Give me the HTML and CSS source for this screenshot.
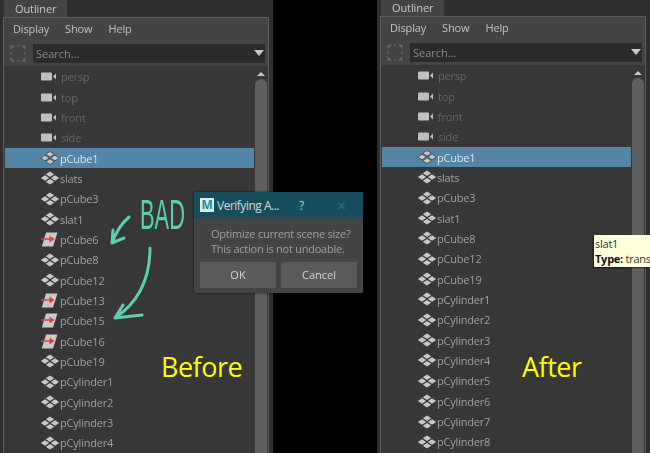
FILE: index.html
```html
<!DOCTYPE html>
<html lang="en">
<head>
    <meta charset="UTF-8">
    <meta name="viewport" content="width=device-width, initial-scale=1.0">
    <title>Outliner before and after</title>
    <link rel="stylesheet" href="styles.css">
</head>
<body>
<svg class="defs" width="0" height="0">
    <symbol id="camera" viewBox="0 0 16 9">
        <rect x="0" y="0.500" width="11" height="8" rx="1" fill="#c0c0c0"/>
        <path d="M12 4.500 15 1.500V7.500Z" fill="#c0c0c0"/>
    </symbol>
    <symbol id="transform" viewBox="0 0 20 14">
        <path d="M10 0.500 14.200 3.300 10 6.100 5.800 3.300ZM5 4.200 9.200 7 5 9.800 0.800 7ZM15 4.200 19.200 7 15 9.800 10.800 7ZM10 7.900 14.200 10.700 10 13.500 5.800 10.700Z" fill="#c8c8c8"/>
    </symbol>
    <symbol id="instance" viewBox="0 0 17 15">
        <path d="M5 0.500H16.500L12 14.500H0.800Z" fill="#cacaca"/>
        <path d="M0 7H9" stroke="#e23c42" stroke-width="1.500"/>
        <path d="M8.500 3.500 13.500 7 8.500 10.500Z" fill="#e23c42"/>
    </symbol>
    <symbol id="frame" viewBox="0 0 16 17">
        <path d="M0.500 0.500H5L0.500 5ZM15.500 0.500H11L15.500 5ZM0.500 16.500H5L0.500 12ZM15.500 16.500H11L15.500 12Z" fill="#666"/>
        <path d="M7 1H9M7 16H9M1 7V10M15 7V10" fill="none" stroke="#5a5a5a" stroke-width="1.500"/>
    </symbol>
</svg>

<div class="window window-before">
    <div class="tabs"><span class="tab">Outliner</span></div>
    <div class="panel">
        <div class="menu"><span>Display</span><span>Show</span><span>Help</span></div>
        <div class="search-row">
            <svg class="frame"><use href="#frame"/></svg>
            <div class="search"><span>Search...</span><i class="caret"></i></div>
        </div>
        <div class="list-area">
            <ul class="list">
                <li class="dim"><svg class="ic-cam"><use href="#camera"/></svg>persp</li>
                <li class="dim"><svg class="ic-cam"><use href="#camera"/></svg>top</li>
                <li class="dim"><svg class="ic-cam"><use href="#camera"/></svg>front</li>
                <li class="dim"><svg class="ic-cam"><use href="#camera"/></svg>side</li>
                <li class="selected"><svg class="ic-xf"><use href="#transform"/></svg>pCube1</li>
                <li><svg class="ic-xf"><use href="#transform"/></svg>slats</li>
                <li><svg class="ic-xf"><use href="#transform"/></svg>pCube3</li>
                <li><svg class="ic-xf"><use href="#transform"/></svg>slat1</li>
                <li><svg class="ic-inst"><use href="#instance"/></svg>pCube6</li>
                <li><svg class="ic-xf"><use href="#transform"/></svg>pCube8</li>
                <li><svg class="ic-xf"><use href="#transform"/></svg>pCube12</li>
                <li><svg class="ic-inst"><use href="#instance"/></svg>pCube13</li>
                <li><svg class="ic-inst"><use href="#instance"/></svg>pCube15</li>
                <li><svg class="ic-inst"><use href="#instance"/></svg>pCube16</li>
                <li><svg class="ic-xf"><use href="#transform"/></svg>pCube19</li>
                <li><svg class="ic-xf"><use href="#transform"/></svg>pCylinder1</li>
                <li><svg class="ic-xf"><use href="#transform"/></svg>pCylinder2</li>
                <li><svg class="ic-xf"><use href="#transform"/></svg>pCylinder3</li>
                <li><svg class="ic-xf"><use href="#transform"/></svg>pCylinder4</li>
            </ul>
            <div class="scrollbar"><i class="arrow-up"></i><div class="thumb"></div></div>
        </div>
    </div>
</div>

<div class="window window-after">
    <div class="tabs"><span class="tab">Outliner</span></div>
    <div class="panel">
        <div class="menu"><span>Display</span><span>Show</span><span>Help</span></div>
        <div class="search-row">
            <svg class="frame"><use href="#frame"/></svg>
            <div class="search"><span>Search...</span><i class="caret"></i></div>
        </div>
        <div class="list-area">
            <ul class="list">
                <li class="dim"><svg class="ic-cam"><use href="#camera"/></svg>persp</li>
                <li class="dim"><svg class="ic-cam"><use href="#camera"/></svg>top</li>
                <li class="dim"><svg class="ic-cam"><use href="#camera"/></svg>front</li>
                <li class="dim"><svg class="ic-cam"><use href="#camera"/></svg>side</li>
                <li class="selected"><svg class="ic-xf"><use href="#transform"/></svg>pCube1</li>
                <li><svg class="ic-xf"><use href="#transform"/></svg>slats</li>
                <li><svg class="ic-xf"><use href="#transform"/></svg>pCube3</li>
                <li><svg class="ic-xf"><use href="#transform"/></svg>slat1</li>
                <li><svg class="ic-xf"><use href="#transform"/></svg>pCube8</li>
                <li><svg class="ic-xf"><use href="#transform"/></svg>pCube12</li>
                <li><svg class="ic-xf"><use href="#transform"/></svg>pCube19</li>
                <li><svg class="ic-xf"><use href="#transform"/></svg>pCylinder1</li>
                <li><svg class="ic-xf"><use href="#transform"/></svg>pCylinder2</li>
                <li><svg class="ic-xf"><use href="#transform"/></svg>pCylinder3</li>
                <li><svg class="ic-xf"><use href="#transform"/></svg>pCylinder4</li>
                <li><svg class="ic-xf"><use href="#transform"/></svg>pCylinder5</li>
                <li><svg class="ic-xf"><use href="#transform"/></svg>pCylinder6</li>
                <li><svg class="ic-xf"><use href="#transform"/></svg>pCylinder7</li>
                <li><svg class="ic-xf"><use href="#transform"/></svg>pCylinder8</li>
            </ul>
            <div class="scrollbar"><i class="arrow-up"></i><div class="thumb"></div></div>
        </div>
    </div>
</div>

<span class="caption caption-before">Before</span>
<span class="caption caption-after">After</span>

<div class="bad-note">
    <span class="bad-word">BAD</span>
    <svg class="bad-arrows" viewBox="0 0 90 130" width="90" height="130">
        <path d="M25 25C18 31 12 40 8 51M9 38 8 51 20 46" fill="none" stroke="#5fcdb0" stroke-width="3" stroke-linecap="round" stroke-linejoin="round"/>
        <path d="M46 56C46 82 38 108 11 126M19 113 11 126 38 123" fill="none" stroke="#5fcdb0" stroke-width="3" stroke-linecap="round" stroke-linejoin="round"/>
    </svg>
</div>

<div class="dialog">
    <div class="dialog-title">
        <span class="app-icon">M</span>
        <span class="dialog-name">Verifying A...</span>
        <span class="dialog-help">?</span>
        <span class="dialog-close">&#10005;</span>
    </div>
    <div class="dialog-body">
        <p>Optimize current scene size?<br>This action is not undoable.</p>
        <div class="dialog-buttons">
            <div class="btn">OK</div>
            <div class="btn">Cancel</div>
        </div>
    </div>
</div>

<div class="tooltip">
    <div>slat1</div>
    <div><b>Type:</b> trans</div>
</div>
</body>
</html>
```

FILE: styles.css
```css
html, body {
    margin: 0;
    padding: 0;
    height: 100%;
    background: #000;
    overflow: hidden;
    font-family: 'Open Sans', 'Noto Sans', sans-serif;
}
.defs {
    position: absolute;
}
.window {
    position: absolute;
    top: 0;
    height: 453px;
    background: #2f2f2f;
    overflow: hidden;
    display: flex;
    flex-direction: column;
    filter: blur(0.3px);
}
.window-before {
    left: 0;
    width: 273px;
}
.window-after {
    left: 377px;
    top: -1px;
    width: 273px;
    height: 454px;
}
.tabs {
    height: 17px;
    padding-left: 4px;
    flex: none;
    display: flex;
}
.tab {
    height: 17px;
    padding: 0 11px;
    background: #444;
    color: #c8c8c8;
    font-size: 11px;
    line-height: 18px;
    letter-spacing: -0.1px;
}
.panel {
    flex: 1;
    margin-left: 3px;
    margin-right: 4px;
    border: 1px solid #5c5c5c;
    border-bottom: none;
    background: #444;
    display: flex;
    flex-direction: column;
    min-height: 0;
}
.menu {
    height: 21px;
    margin-bottom: 3px;
    padding-left: 9px;
    display: flex;
    gap: 16px;
    align-items: center;
    color: #c0c0c0;
    font-size: 11px;
    letter-spacing: -0.15px;
    flex: none;
}
.search-row {
    height: 22px;
    display: flex;
    align-items: center;
    flex: none;
}
.frame {
    width: 16px;
    height: 17px;
    margin-left: 6px;
    margin-right: 7px;
}
.search {
    flex: 1;
    height: 19px;
    background: #2b2b2b;
    margin-right: 3px;
    display: flex;
    align-items: center;
    justify-content: space-between;
    padding: 0 1px 0 3px;
    color: #8a8a8a;
    font-size: 11px;
}
.caret {
    width: 0;
    height: 0;
    border-left: 5px solid transparent;
    border-right: 5px solid transparent;
    border-top: 6px solid #c8c8c8;
}
.list-area {
    flex: 1;
    min-height: 0;
    display: flex;
    background: #373737;
    margin-top: 2px;
    padding-left: 1px;
    overflow: hidden;
}
.list {
    list-style: none;
    margin: 0;
    padding: 0.5px 0 0;
    width: 249px;
    flex: none;
}
.list li {
    height: 20.35px;
    display: flex;
    align-items: center;
    padding-left: 35px;
    color: #a0a0a0;
    font-size: 11px;
    letter-spacing: -0.2px;
    white-space: nowrap;
}
.list li.dim {
    color: #666;
}
.list li.selected {
    background: #5285a6;
    color: #e4e4e4;
}
.ic-cam {
    width: 16px;
    height: 9px;
    margin: 0 4px 0 1px;
}
.ic-xf {
    width: 20px;
    height: 14px;
}
.selected .ic-xf {
    stroke: #3a3a3a;
    stroke-width: 0.7;
}
.ic-inst {
    width: 17px;
    height: 15px;
    margin-left: 1px;
    margin-right: 2px;
}
.scrollbar {
    flex: 1;
    position: relative;
    padding: 6px 1px 0 1px;
}
.arrow-up {
    display: block;
    width: 0;
    height: 0;
    margin: 0 auto 3px;
    border-left: 4px solid transparent;
    border-right: 4px solid transparent;
    border-bottom: 4px solid #c8c8c8;
}
.thumb {
    height: 400px;
    background: #5f5f5f;
    border-radius: 6px 6px 0 0;
}
.caption {
    position: absolute;
    color: #ffff00;
    font-size: 27px;
    line-height: 36px;
    letter-spacing: -0.5px;
}
.caption-before {
    left: 161px;
    top: 349px;
}
.caption-after {
    left: 522px;
    top: 349px;
}
.bad-note {
    position: absolute;
    left: 104px;
    top: 192px;
    width: 90px;
    height: 130px;
}
.bad-word {
    position: absolute;
    left: 36px;
    top: 0;
    color: #5fcdb0;
    font-size: 42px;
    line-height: 46px;
    font-family: 'Liberation Sans', sans-serif;
    transform: scaleX(0.52);
    transform-origin: left top;
}
.bad-arrows {
    position: absolute;
    left: 0;
    top: 0;
}
.dialog {
    position: absolute;
    left: 194px;
    top: 192px;
    width: 169px;
    height: 101px;
    background: #444;
    box-shadow: 0 0 2px rgba(0, 0, 0, 0.8);
    display: flex;
    flex-direction: column;
    filter: blur(0.3px);
}
.dialog-title {
    height: 26px;
    background: #174e5e;
    display: flex;
    align-items: center;
    color: #d8d8d8;
    font-size: 12px;
    letter-spacing: -0.5px;
    flex: none;
    position: relative;
}
.app-icon {
    width: 14px;
    height: 14px;
    margin-left: 6px;
    margin-right: 3px;
    background: #d5eeee;
    color: #1f8a93;
    font-size: 12px;
    font-weight: 700;
    line-height: 14px;
    text-align: center;
}
.dialog-help {
    position: absolute;
    left: 105px;
    color: #c8c8c8;
}
.dialog-close {
    position: absolute;
    left: 143px;
    color: #3f6f7d;
    font-size: 11px;
}
.dialog-body {
    flex: 1;
    padding: 8px 6px 4px 6px;
    display: flex;
    flex-direction: column;
}
.dialog-body p {
    margin: 0 0 0 11px;
    color: #a0a0a0;
    font-size: 11px;
    line-height: 15px;
    letter-spacing: -0.25px;
    white-space: nowrap;
}
.dialog-buttons {
    margin-top: 6px;
    display: flex;
    gap: 5px;
}
.btn {
    flex: 1;
    height: 26px;
    line-height: 26px;
    background: #5a5a5a;
    color: #d4d4d4;
    font-size: 11px;
    text-align: center;
}
.tooltip {
    position: absolute;
    left: 594px;
    top: 235px;
    width: 56px;
    height: 32px;
    overflow: hidden;
    background: #ffffdc;
    color: #333;
    font-size: 11px;
    line-height: 15px;
    padding: 1px 0 0 1px;
    box-sizing: border-box;
    white-space: nowrap;
    letter-spacing: -0.25px;
    box-shadow: -1px 1px 1px rgba(0, 0, 0, 0.5);
}
.tooltip b {
    color: #111;
}
```
